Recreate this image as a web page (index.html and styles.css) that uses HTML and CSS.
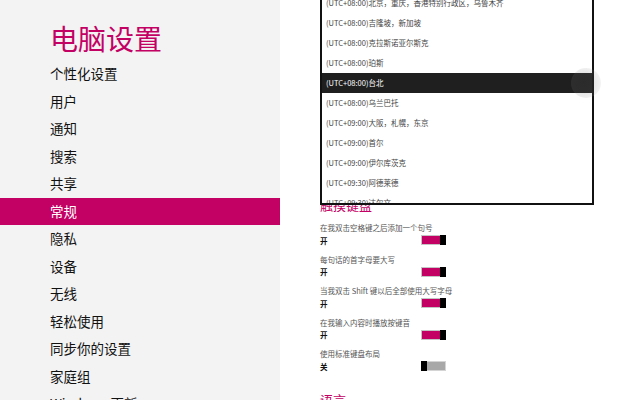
FILE: index.html
```html
<!DOCTYPE html>
<html>
<head>
    <meta charset="utf-8">
    <title>电脑设置</title>
    <link rel="stylesheet" href="styles.css">
</head>
<body>
    <div class="nav">
        <h1 class="nav-title">电脑设置</h1>
        <div class="nav-item">个性化设置</div>
        <div class="nav-item">用户</div>
        <div class="nav-item">通知</div>
        <div class="nav-item">搜索</div>
        <div class="nav-item">共享</div>
        <div class="nav-item active">常规</div>
        <div class="nav-item">隐私</div>
        <div class="nav-item">设备</div>
        <div class="nav-item">无线</div>
        <div class="nav-item">轻松使用</div>
        <div class="nav-item">同步你的设置</div>
        <div class="nav-item">家庭组</div>
        <div class="nav-item">Windows 更新</div>
    </div>

    <div class="main">
        <!-- open time zone list -->
        <div class="tz-list">
            <div class="tz">(UTC+08:00)北京，重庆，香港特别行政区，乌鲁木齐</div>
            <div class="tz">(UTC+08:00)吉隆坡，新加坡</div>
            <div class="tz">(UTC+08:00)克拉斯诺亚尔斯克</div>
            <div class="tz">(UTC+08:00)珀斯</div>
            <div class="tz selected">(UTC+08:00)台北</div>
            <div class="tz">(UTC+08:00)乌兰巴托</div>
            <div class="tz">(UTC+09:00)大阪，札幌，东京</div>
            <div class="tz">(UTC+09:00)首尔</div>
            <div class="tz">(UTC+09:00)伊尔库茨克</div>
            <div class="tz">(UTC+09:30)阿德莱德</div>
            <div class="tz">(UTC+09:30)达尔文</div>
        </div>
        <div class="touch-dot"></div>

        <h2 class="section-title">触摸键盘</h2>

        <div class="setting">
            <div class="label">在我双击空格键之后添加一个句号</div>
            <div class="value"><span>开</span><div class="toggle on"><div class="track"></div><div class="thumb"></div></div></div>
        </div>
        <div class="setting">
            <div class="label">每句话的首字母要大写</div>
            <div class="value"><span>开</span><div class="toggle on"><div class="track"></div><div class="thumb"></div></div></div>
        </div>
        <div class="setting">
            <div class="label">当我双击 Shift 键以后全部使用大写字母</div>
            <div class="value"><span>开</span><div class="toggle on"><div class="track"></div><div class="thumb"></div></div></div>
        </div>
        <div class="setting">
            <div class="label">在我输入内容时播放按键音</div>
            <div class="value"><span>开</span><div class="toggle on"><div class="track"></div><div class="thumb"></div></div></div>
        </div>
        <div class="setting">
            <div class="label">使用标准键盘布局</div>
            <div class="value"><span>关</span><div class="toggle off"><div class="thumb"></div><div class="track"></div></div></div>
        </div>

        <h2 class="section-title lang">语言</h2>
    </div>
</body>
</html>
```

FILE: styles.css
```css
:root {
    --accent: #c30064;
    --nav-bg: #f3f3f3;
    --text: #111;
    --muted: #555;
}

body {
    margin: 0;
    height: 400px;
    overflow: hidden;
    display: flex;
    background: white;
    color: var(--text);
    font-family: "Noto Sans CJK SC", "Noto Sans", sans-serif;
}

/* left navigation */
.nav {
    width: 280px;
    flex-shrink: 0;
    height: 400px;
    overflow: hidden;
    background: var(--nav-bg);
    padding-top: 20px;
    box-sizing: border-box;
}

.nav-title {
    margin: 0 0 4px;
    padding-left: 50px;
    font-size: 28px;
    line-height: 36px;
    font-weight: normal;
    color: var(--accent);
}

.nav-item {
    height: 27.5px;
    line-height: 27.5px;
    padding-left: 50px;
    font-size: 13.5px;
}

.nav-item.active {
    background: var(--accent);
    color: white;
}

/* right side */
.main {
    flex: 1;
    position: relative;
    padding: 196px 0 0 40px;
    overflow: hidden;
}

.tz-list {
    position: absolute;
    left: 40px;
    top: -20px;
    width: 274px;
    height: 225px;
    box-sizing: border-box;
    border: 2px solid #111;
    background: white;
    padding-top: 11px;
    overflow: hidden;
    z-index: 2;
}

.tz {
    height: 20px;
    line-height: 20px;
    padding-left: 4px;
    font-size: 7.5px;
    color: #444;
    white-space: nowrap;
}

.tz.selected {
    background: #1f1f1f;
    color: white;
}

.touch-dot {
    position: absolute;
    left: 291px;
    top: 68px;
    width: 30px;
    height: 30px;
    border-radius: 50%;
    background: radial-gradient(circle at 42% 50%, rgba(70,70,70,0.3) 0%, rgba(120,120,120,0.16) 50%, rgba(190,190,190,0.14) 82%, rgba(240,240,240,0.4) 100%);
    z-index: 3;
}

.section-title {
    margin: 0 0 8px;
    font-size: 13px;
    line-height: 18px;
    font-weight: normal;
    color: var(--accent);
}

.section-title.lang {
    margin-top: 19px;
}

.setting {
    margin-bottom: 7.5px;
}

.label {
    height: 12px;
    line-height: 12px;
    font-size: 7.5px;
    color: var(--muted);
}

.value {
    width: 126px;
    height: 12px;
    display: flex;
    align-items: center;
    justify-content: space-between;
    font-size: 7.5px;
    font-weight: bold;
}

.toggle {
    width: 25px;
    height: 10px;
    display: flex;
}

.toggle .track {
    flex: 1;
    border: 1px solid #c4c4c4;
}

.toggle.on .track {
    background: var(--accent);
    border-right: none;
}

.toggle.off .track {
    background: #a8a8a8;
    border: 1px solid #d4d4d4;
    border-left: none;
}

.toggle .thumb {
    width: 6px;
    background: black;
}
```
